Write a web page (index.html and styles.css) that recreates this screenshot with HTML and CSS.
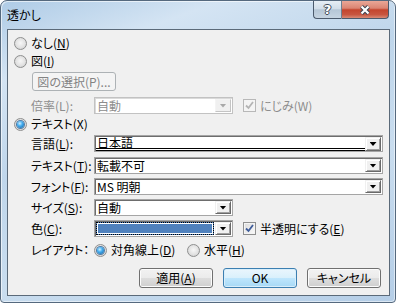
FILE: index.html
```html
<!DOCTYPE html>
<html lang="ja">
  <head>
    <meta charset="UTF-8" />
    <meta name="viewport" content="width=device-width, initial-scale=1.0" />
    <title>透かし</title>
    <link rel="stylesheet" href="styles.css">
  </head>
  <body>
    <div class="window">
      <!-- Title bar -->
      <div class="titlebar">
        <span class="title">透かし</span>
        <div class="caption-buttons">
          <span class="cap-btn help-btn">?</span>
          <span class="cap-btn close-btn">
            <svg width="14" height="12" viewBox="0 0 14 12">
              <path d="M3.5 2.5 L10.5 9.5 M10.5 2.5 L3.5 9.5" stroke="#3a4452" stroke-width="4.2" fill="none" />
              <path d="M3.5 2.5 L10.5 9.5 M10.5 2.5 L3.5 9.5" stroke="#ffffff" stroke-width="2.2" fill="none" />
            </svg>
          </span>
        </div>
      </div>

      <!-- Dialog body -->
      <div class="client">
        <div class="opt row-none"><span class="radio"></span><span>なし(<u>N</u>)</span></div>
        <div class="opt row-pic"><span class="radio"></span><span>図(<u>I</u>)</span></div>
        <div class="pic-row"><span class="pic-btn">図の選択(P)...</span></div>

        <div class="field row-scale">
          <span class="label dim">倍率(L):</span>
          <div class="combo short disabled">
            <span class="value">自動</span><span class="drop"></span>
          </div>
          <span class="check disabled">
            <svg width="9" height="9" viewBox="0 0 9 9"><path d="M1 4.5 L3.5 7 L8 1" stroke="#b4b4b4" stroke-width="1.8" fill="none" /></svg>
          </span>
          <span class="dim">にじみ(W)</span>
        </div>

        <div class="opt row-text-opt"><span class="radio on"></span><span>テキスト(X)</span></div>

        <div class="field row-lang">
          <span class="label">言語(<u>L</u>):</span>
          <div class="combo lang">
            <span class="value">日本語</span><span class="drop"></span>
          </div>
        </div>

        <div class="field row-text">
          <span class="label">テキスト(<u>T</u>):</span>
          <div class="combo">
            <span class="value">転載不可</span><span class="drop"></span>
          </div>
        </div>

        <div class="field row-font">
          <span class="label">フォント(<u>F</u>):</span>
          <div class="combo">
            <span class="value">MS 明朝</span><span class="drop"></span>
          </div>
        </div>

        <div class="field row-size">
          <span class="label">サイズ(<u>S</u>):</span>
          <div class="combo short">
            <span class="value">自動</span><span class="drop"></span>
          </div>
        </div>

        <div class="field row-color">
          <span class="label">色(<u>C</u>):</span>
          <div class="combo short">
            <span class="value swatch"></span><span class="drop"></span>
          </div>
          <span class="check">
            <svg width="9" height="9" viewBox="0 0 9 9"><path d="M1 4.5 L3.5 7 L8 1" stroke="#3e5c9a" stroke-width="1.8" fill="none" /></svg>
          </span>
          <span>半透明にする(<u>E</u>)</span>
        </div>

        <div class="field row-layout">
          <span class="label">レイアウト：</span>
          <span class="choice first"><span class="radio on"></span><span>対角線上(<u>D</u>)</span></span>
          <span class="choice"><span class="radio"></span><span>水平(<u>H</u>)</span></span>
        </div>

        <div class="actions">
          <span class="btn">適用(<u>A</u>)</span>
          <span class="btn default">OK</span>
          <span class="btn">キャンセル</span>
        </div>
      </div>
    </div>
  </body>
</html>
```

FILE: styles.css
```css
* {
  box-sizing: border-box;
}

body {
  margin: 0;
  background-color: #fff;
  font-family: "Noto Sans CJK JP", sans-serif;
  font-size: 12px;
  font-feature-settings: "palt";
  color: #000;
}

u {
  text-underline-offset: 1px;
}

/* Window frame */
.window {
  width: 396px;
  height: 303px;
  display: flex;
  flex-direction: column;
  border: 1px solid #55697e;
  border-radius: 7px 7px 4px 4px;
  background: linear-gradient(160deg, #aecbe6 0%, #d4e4f3 18%, #bfd6eb 40%, #c9ddef 65%, #b5cee7 100%);
  box-shadow: inset 1px 1px 0 rgba(255, 255, 255, 0.6), inset -1px -1px 0 rgba(255, 255, 255, 0.5);
}

.titlebar {
  height: 28px;
  flex-shrink: 0;
  display: flex;
  justify-content: space-between;
  align-items: flex-start;
}

.title {
  padding: 6px 0 0 6px;
  line-height: 16px;
}

.caption-buttons {
  display: flex;
  margin-right: 6px;
}

.cap-btn {
  height: 18px;
  display: flex;
  align-items: center;
  justify-content: center;
  border: 1px solid #4b5a6c;
  border-top: none;
}

.help-btn {
  width: 29px;
  border-right-color: #6f7f90;
  border-radius: 0 0 0 4px;
  background: linear-gradient(#e6eef5, #d2dee9 45%, #b5c6d6 52%, #c6d4e1 100%);
  color: #fff;
  font: bold 13px "DejaVu Sans", sans-serif;
  text-shadow: 1px 0 #3f4a58, -1px 0 #3f4a58, 0 1px #3f4a58, 0 -1px #3f4a58;
}

.close-btn {
  width: 47px;
  border-left: none;
  border-radius: 0 0 4px 0;
  background: linear-gradient(#eaa797, #db8573 42%, #c4452e 52%, #c85640 80%, #d98a76 100%);
}

/* Client area */
.client {
  flex: 1;
  margin: 0 5px 6px 6px;
  border: 1px solid #5b6a79;
  background-color: #f0f0f0;
  padding: 0 6px;
  display: flex;
  flex-direction: column;
}

.opt {
  height: 16px;
  line-height: 16px;
  display: flex;
  align-items: center;
  gap: 4px;
}

.row-none {
  margin-top: 5px;
}

.row-pic {
  margin-top: 2px;
}

.pic-row {
  margin-top: 3px;
  padding-left: 18px;
  display: flex;
}

.pic-btn {
  width: 84px;
  height: 19px;
  line-height: 17px;
  text-align: center;
  border: 1px solid #adb2b5;
  border-radius: 3px;
  background-color: #f4f4f4;
  color: #838383;
}

.field {
  height: 17px;
  line-height: 16px;
  display: flex;
  align-items: center;
  padding-left: 17px;
}

.label {
  width: 63px;
  flex-shrink: 0;
  white-space: nowrap;
}

.dim {
  color: #8d8d8d;
}

.row-scale {
  margin-top: 6px;
}

.row-text-opt {
  margin-top: 2px;
}

.row-lang {
  margin-top: 3px;
}

.row-text {
  margin-top: 5px;
}

.row-font,
.row-size,
.row-color {
  margin-top: 4px;
}

.row-layout {
  margin-top: 5px;
  height: 16px;
}

/* Combo boxes */
.combo {
  flex: 1;
  height: 17px;
  display: flex;
  padding: 1px;
  border: 1px solid #a5a5a5;
  background-color: #fff;
  box-shadow: inset 1px 1px 0 #6d6d6d;
}

.combo.short {
  flex: none;
  width: 139px;
}

.combo.disabled {
  border-color: #c2c2c2;
  box-shadow: inset 1px 1px 0 #dadada;
  color: #8d8d8d;
}

.combo.lang {
  padding-bottom: 0;
}

.value {
  flex: 1;
  padding-left: 1px;
  line-height: 13px;
  white-space: nowrap;
}

.combo.lang .value {
  line-height: 12px;
  border-bottom: 3px double #000;
}

.value.swatch {
  margin-right: 1px;
  border: 1px dotted #000;
  background-color: #4f81bd;
  box-shadow: inset 0 0 0 1px #fff;
}

.drop {
  width: 16px;
  flex-shrink: 0;
  display: flex;
  align-items: center;
  justify-content: center;
  background-color: #f0f0f0;
  border: 1px solid;
  border-color: #f0f0f0 #696969 #696969 #f0f0f0;
  box-shadow: inset 1px 1px 0 #fff, inset -1px -1px 0 #a0a0a0;
}

.drop::before {
  content: "";
  width: 7px;
  height: 4px;
  background-color: #000;
  clip-path: polygon(0 0, 100% 0, 50% 100%);
}

.disabled .drop {
  border-color: #f4f4f4 #c4c4c4 #c4c4c4 #f4f4f4;
  box-shadow: none;
}

.disabled .drop::before {
  background-color: #a8a8a8;
}

/* Check boxes and radio buttons */
.check {
  width: 13px;
  height: 13px;
  margin: 0 4px 0 10px;
  flex-shrink: 0;
  display: flex;
  align-items: center;
  justify-content: center;
  border: 1px solid #8e8f8f;
  background: linear-gradient(135deg, #dadada, #fbfbfb);
  box-shadow: inset 0 0 0 1px #f4f4f4;
}

.check.disabled {
  border-color: #b8b8b8;
  background: #f4f4f4;
}

.radio {
  width: 13px;
  height: 13px;
  flex-shrink: 0;
  display: flex;
  align-items: center;
  justify-content: center;
  border-radius: 50%;
  border: 1px solid #8e8f8f;
  background: radial-gradient(circle at 50% 45%, #f7f7f7 0%, #e2e2e2 55%, #c6c6c6 100%);
}

.radio.on::after {
  content: "";
  width: 7px;
  height: 7px;
  border-radius: 50%;
  background: radial-gradient(circle at 40% 35%, #d2f0ff 0%, #45aef0 40%, #0e5c9c 100%);
  box-shadow: 0 0 0 1px #4f7ba6;
}

.choice {
  display: flex;
  align-items: center;
  gap: 4px;
}

.choice.first {
  width: 93px;
}

/* Dialog buttons */
.actions {
  margin-top: 10px;
  padding-right: 2px;
  display: flex;
  justify-content: flex-end;
  gap: 10px;
}

.btn {
  width: 74px;
  height: 20px;
  line-height: 18px;
  text-align: center;
  border: 1px solid #707070;
  border-radius: 3px;
  background: linear-gradient(#f2f2f2 0%, #ebebeb 50%, #dddddd 51%, #cfcfcf 100%);
  box-shadow: inset 0 0 0 1px #fcfcfc;
}

.btn.default {
  border-color: #3c7fb1;
  background: linear-gradient(#eaf6fd 0%, #d9f0fc 50%, #bee6fd 51%, #a7d9f5 100%);
  box-shadow: inset 0 0 0 1px #d8eefb;
}
```
